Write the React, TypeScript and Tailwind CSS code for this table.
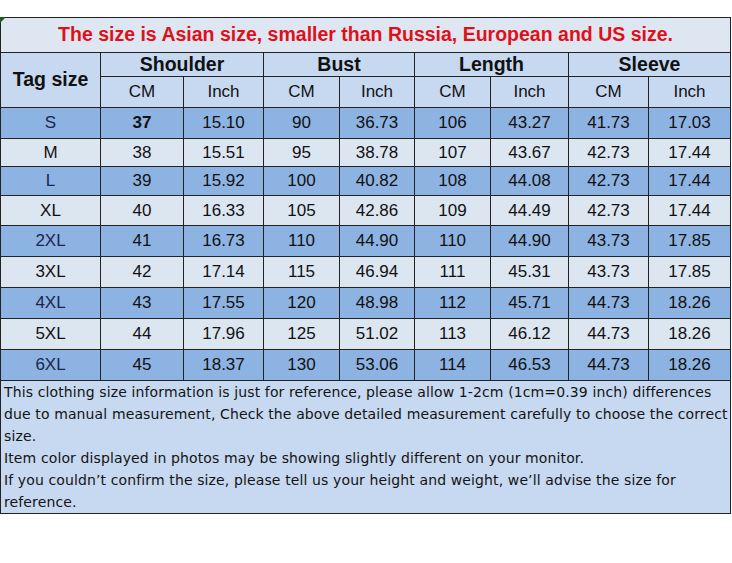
const rows: [string, string, string, string, string, string, string, string, string, number][] = [
  ['S', '37', '15.10', '90', '36.73', '106', '43.27', '41.73', '17.03', 31],
  ['M', '38', '15.51', '95', '38.78', '107', '43.67', '42.73', '17.44', 28],
  ['L', '39', '15.92', '100', '40.82', '108', '44.08', '42.73', '17.44', 29],
  ['XL', '40', '16.33', '105', '42.86', '109', '44.49', '42.73', '17.44', 30],
  ['2XL', '41', '16.73', '110', '44.90', '110', '44.90', '43.73', '17.85', 31],
  ['3XL', '42', '17.14', '115', '46.94', '111', '45.31', '43.73', '17.85', 31],
  ['4XL', '43', '17.55', '120', '48.98', '112', '45.71', '44.73', '18.26', 31],
  ['5XL', '44', '17.96', '125', '51.02', '113', '46.12', '44.73', '18.26', 31],
  ['6XL', '45', '18.37', '130', '53.06', '114', '46.53', '44.73', '18.26', 31],
]

const widths = [100, 83, 80, 76, 75, 76, 78, 80, 82]
const groups = ['Shoulder', 'Bust', 'Length', 'Sleeve']

export default function App() {
  return (
    <div className="min-h-[563px] bg-white pt-[17px] font-['Liberation_Sans',Arial,sans-serif] text-[#111]">
      <div className="relative w-[731px]">
        <svg className="absolute left-0 top-0" width="6" height="6" viewBox="0 0 6 6">
          <path d="M0 0H6L0 6Z" fill="#1f5a1f" />
        </svg>
        <table className="w-[731px] table-fixed border-collapse border border-[#222]">
          <colgroup>
            {widths.map((w, i) => (
              <col key={i} style={{ width: w }} />
            ))}
          </colgroup>
          <tbody>
            <tr className="h-[35px] bg-[#dde6f1]">
              <td colSpan={9} className="border border-[#222] text-center text-[19.5px] font-bold text-[#e0101a]">
                The size is Asian size, smaller than Russia, European and US size.
              </td>
            </tr>
            <tr className="h-[24px] bg-[#c6d9f0]">
              <td rowSpan={2} className="border border-[#222] text-center text-[19.5px] font-bold">
                Tag size
              </td>
              {groups.map((g) => (
                <td key={g} colSpan={2} className="border border-[#222] text-center text-[19.5px] font-bold leading-none">
                  {g}
                </td>
              ))}
            </tr>
            <tr className="h-[31px] bg-[#c6d9f0]">
              {groups.map((g) => (
                <>
                  <td key={g + 'cm'} className="border border-[#222] text-center text-[17px]">CM</td>
                  <td key={g + 'in'} className="border border-[#222] text-center text-[17px]">Inch</td>
                </>
              ))}
            </tr>
            {rows.map((r, i) => (
              <tr
                key={r[0]}
                style={{ height: r[9] }}
                className={i % 2 === 0 ? 'bg-[#8db3e2]' : 'bg-[#dce6f1]'}
              >
                {r.slice(0, 9).map((c, j) => (
                  <td
                    key={j}
                    className={`border border-[#222] text-center text-[17px] ${i === 0 && j === 1 ? 'font-bold' : ''} ${i % 2 === 0 && j === 0 ? 'text-[#1c2550]' : ''}`}
                  >
                    {c}
                  </td>
                ))}
              </tr>
            ))}
            <tr className="h-[132px] bg-[#c6d9f0]">
              <td colSpan={9} className="border border-[#222] pl-[3px] pr-0 py-0 align-top font-['DejaVu_Sans',sans-serif] text-[14px] leading-[22px] tracking-[0.12px] text-[#141414]">
                <p>
                  This clothing size information is just for reference, please allow 1-2cm (1cm=0.39 inch) differences
                  due to manual measurement, Check the above detailed measurement carefully to choose the correct size.
                </p>
                <p>Item color displayed in photos may be showing slightly different on your monitor.</p>
                <p>If you couldn’t confirm the size, please tell us your height and weight, we’ll advise the size for reference.</p>
              </td>
            </tr>
          </tbody>
        </table>
      </div>
    </div>
  )
}
